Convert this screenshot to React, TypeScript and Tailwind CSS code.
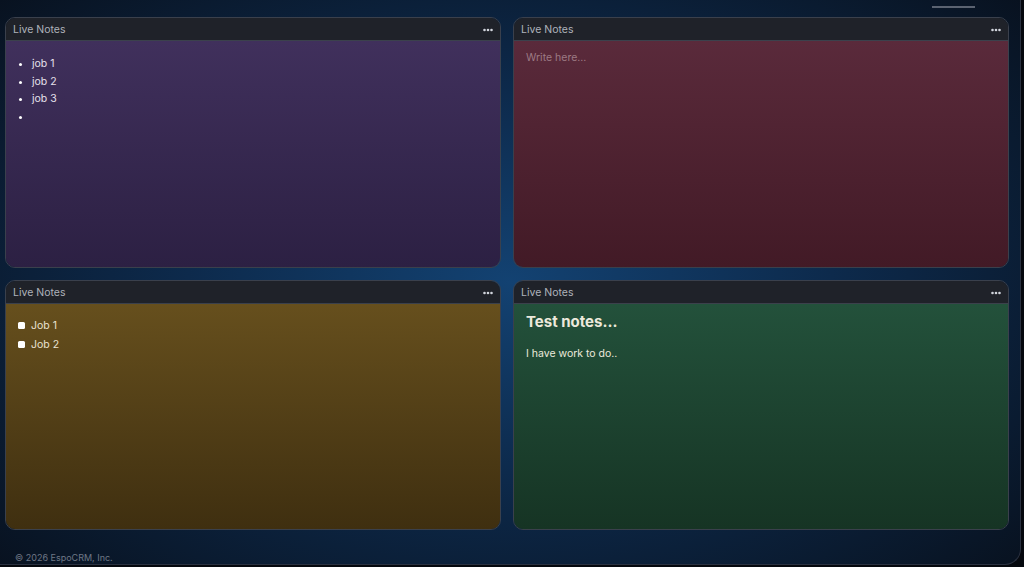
import React from "react";

function Dots() {
  return (
    <svg width="10" height="4" viewBox="0 0 10 4" className="text-gray-300">
      <circle cx="1.5" cy="2" r="1.3" fill="currentColor" />
      <circle cx="5" cy="2" r="1.3" fill="currentColor" />
      <circle cx="8.5" cy="2" r="1.3" fill="currentColor" />
    </svg>
  );
}

function Panel({ bg, children }: { bg: string; children?: React.ReactNode }) {
  return (
    <div className="flex flex-col rounded-[10px] border border-[#3a404c] overflow-hidden">
      <div className="h-[23px] shrink-0 flex items-center justify-between px-[7px] pt-[1px] bg-[#1f2229] border-b border-[#3b414c]">
        <span className="text-[10.5px] text-[#aeb3bb]">Live Notes</span>
        <Dots />
      </div>
      <div className={`flex-1 ${bg}`}>{children}</div>
    </div>
  );
}

function Check({ label }: { label: string }) {
  return (
    <label className="flex items-center gap-[6px]">
      <span className="w-[7px] h-[7px] rounded-[1.5px] bg-white" />
      {label}
    </label>
  );
}

export default function App() {
  return (
    <div className="w-[1024px] h-[567px] bg-[#05080e] overflow-hidden" style={{ fontFamily: "Inter, 'Noto Sans', sans-serif" }}>
      <div className="relative w-[1021px] h-[565px] rounded-br-[16px] border-r border-b border-[#2a3140] bg-[radial-gradient(ellipse_70%_75%_at_50%_50%,#134272_0%,#0d2a4c_45%,#08111e_100%)] flex flex-col px-[5px] pt-[17px]">
        <div className="absolute right-[45px] top-[6px] w-[43px] h-[1.5px] bg-[#5b6371]" />
        <div className="grid grid-cols-2 grid-rows-[251px_250px] gap-x-[12px] gap-y-[12px] w-[1004px]">
          <Panel bg="bg-gradient-to-b from-[#40305c] to-[#2c2043]">
            <ul className="list-disc pl-[26px] pt-[14px] text-[10.5px] leading-[17.5px] text-[#e6e1ec] marker:text-white">
              <li>job 1</li>
              <li>job 2</li>
              <li>job 3</li>
              <li>&nbsp;</li>
            </ul>
          </Panel>
          <Panel bg="bg-gradient-to-b from-[#5a2a3b] to-[#421a26]">
            <div className="px-[12px] pt-[9px] text-[10.5px] text-[#9c7a84]">Write here...</div>
          </Panel>
          <Panel bg="bg-gradient-to-b from-[#664f1d] to-[#3f2f10]">
            <div className="pl-[12px] pt-[14px] flex flex-col gap-[3px] text-[10.5px] text-[#e9e2d2]">
              <Check label="Job 1" />
              <Check label="Job 2" />
            </div>
          </Panel>
          <Panel bg="bg-gradient-to-b from-[#23513b] to-[#163424]">
            <div className="px-[12px] pt-[8px] text-[#ece9dc]">
              <div className="text-[15px] font-bold leading-[20px]">Test notes...</div>
              <div className="mt-[14px] text-[10.5px]">I have work to do..</div>
            </div>
          </Panel>
        </div>
        <div className="mt-auto mb-0 pl-[10px] text-[9px] text-[#6e7786]">© 2026 EspoCRM, Inc.</div>
      </div>
    </div>
  );
}
